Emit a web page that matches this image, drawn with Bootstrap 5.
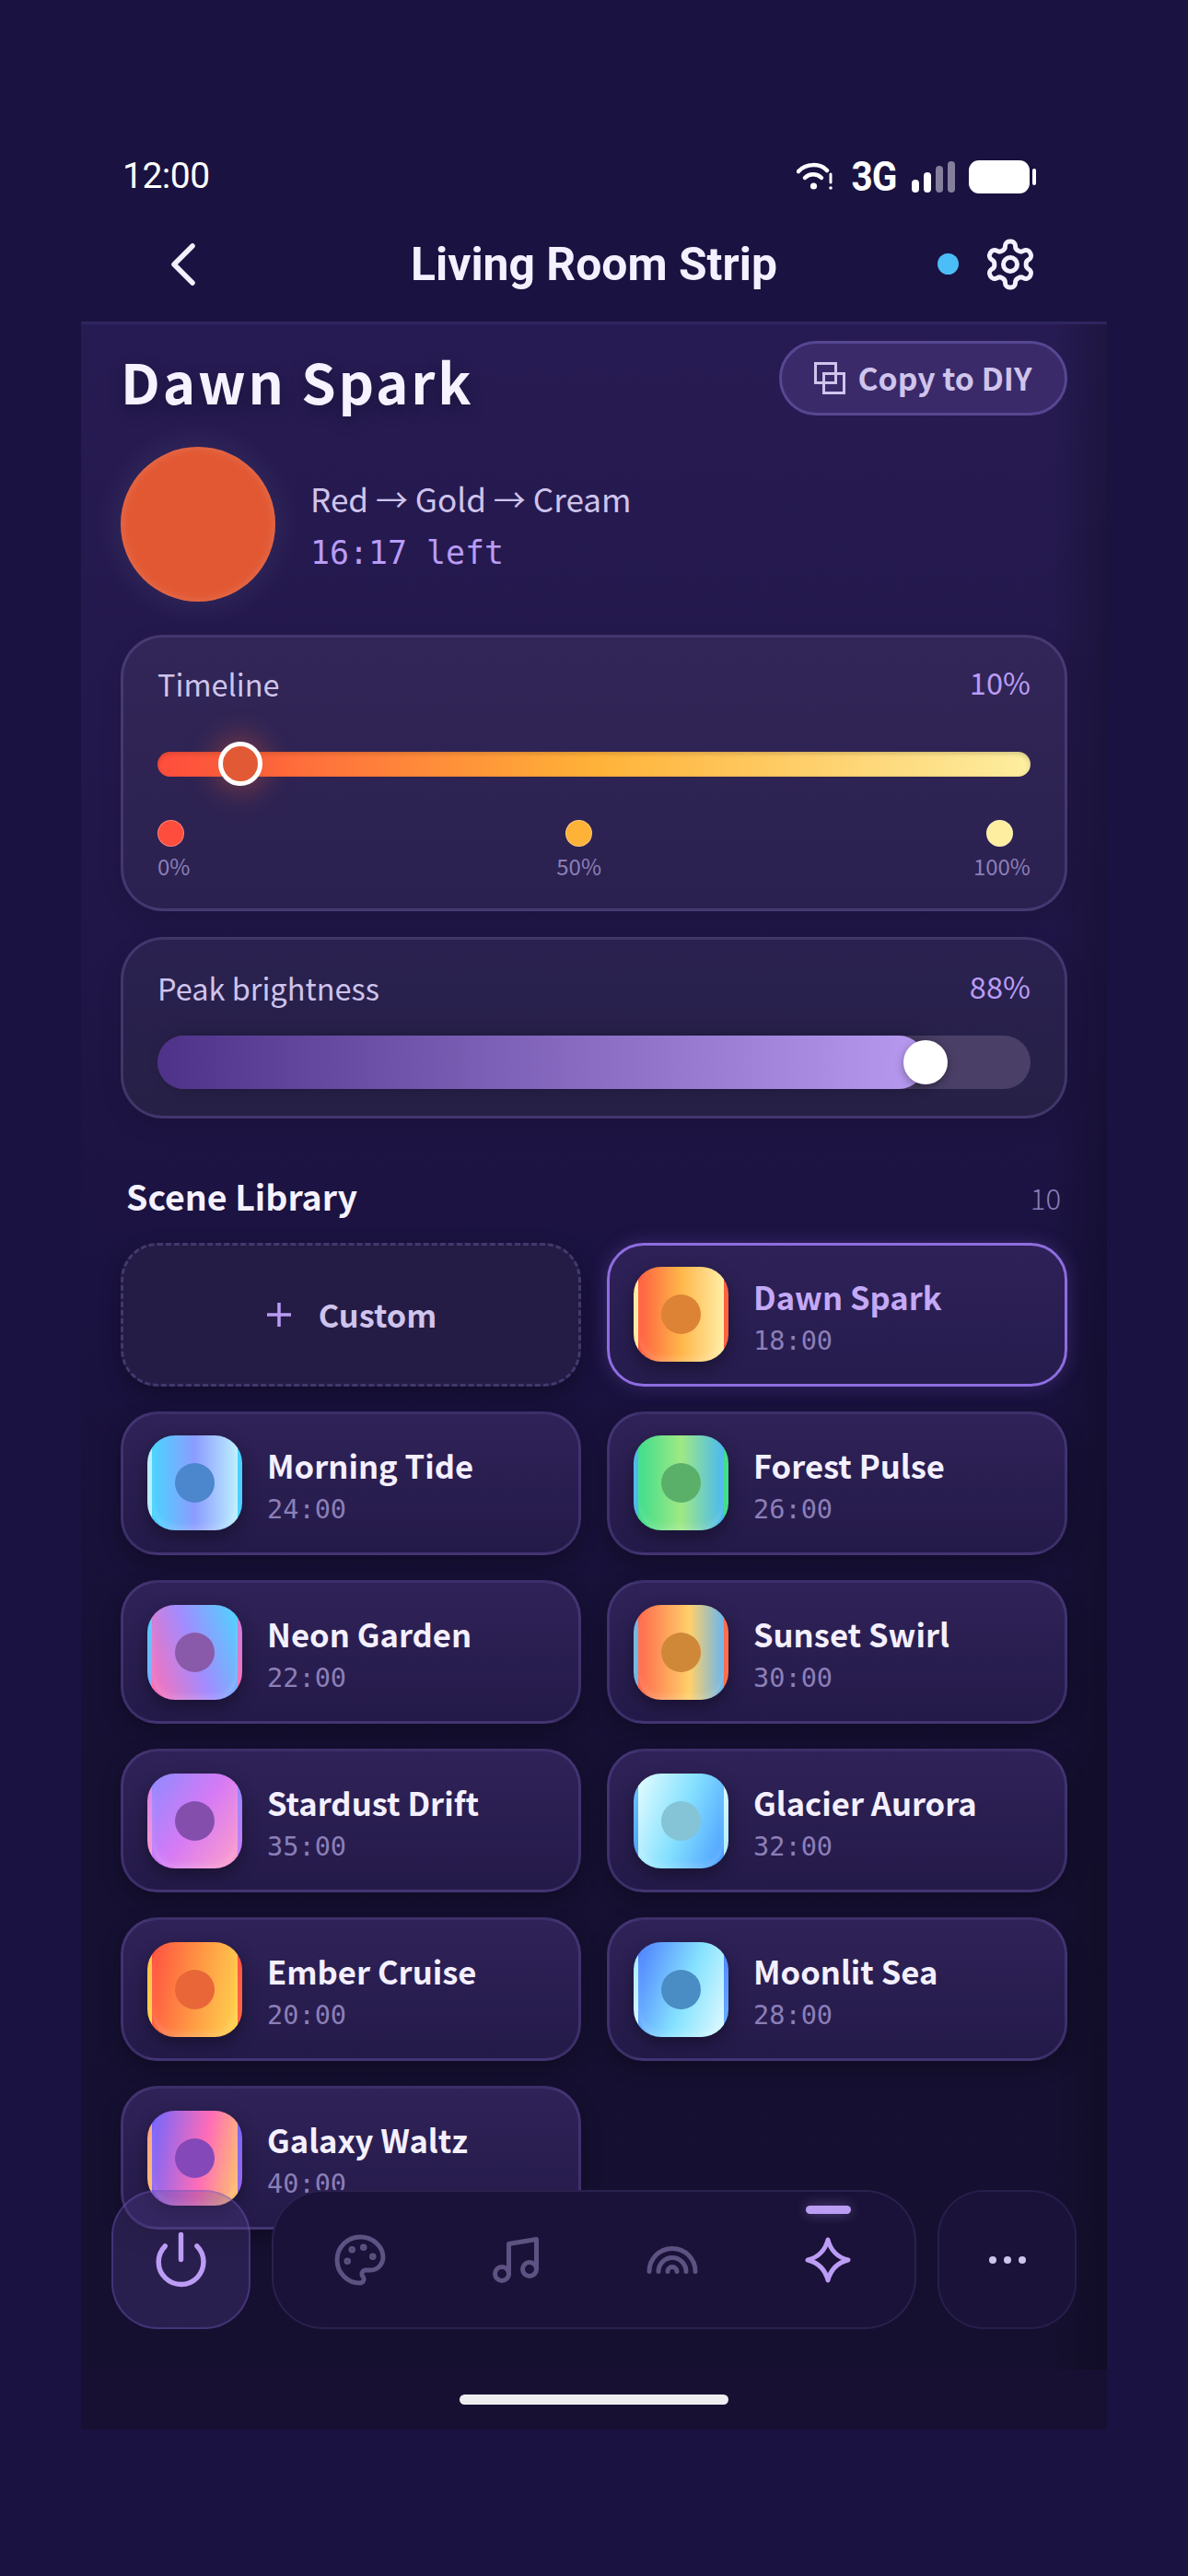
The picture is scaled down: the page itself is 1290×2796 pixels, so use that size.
<!DOCTYPE html>
<html lang="en">
<head>
<meta charset="utf-8">
<title>Living Room Strip</title>
<link href="https://cdn.jsdelivr.net/npm/bootstrap@5.3.0/dist/css/bootstrap.min.css" rel="stylesheet">
<style>
html,body{height:2796px;overflow:hidden}
body{background:#1a1240;font-family:"Noto Sans CJK SC","Noto Sans",sans-serif;color:#f4f0ff;padding-top:144px}
.phone{width:1114px;height:2493px;margin:0 auto;position:relative;overflow:hidden;background:#1a1240}
.statusbar{height:92px;padding:3px 77px 0 45px;font-family:Roboto,sans-serif}
.clock{font-size:39px;letter-spacing:-.5px;color:#fff}
.net{display:inline-block;font-size:45px;font-weight:700;color:#fff;letter-spacing:-1px;line-height:1;margin:0 17px 0 14px;transform:scaleX(.9);transform-origin:right center}
.batt{margin-left:15px}
.topbar{height:116px;padding:0 75px 12px;border-bottom:3px solid #2f2560}
.flank{width:220px}
.flank-left{padding-left:23px}
.apptitle{font-family:Roboto,sans-serif;font-weight:700;font-size:49.8px;color:#f4f0ff;margin:0;padding-top:3px}
.livedot{width:23px;height:23px;border-radius:50%;background:#4bbdf7;margin-right:26px}
.pane{height:2220px;overflow:hidden;padding:18px 43px 0;position:relative;
 background:linear-gradient(90deg,rgba(0,0,0,0) 94.5%,rgba(0,0,0,.22) 100%),linear-gradient(180deg,#271b53 0,#221749 25%,#1a1240 48%,#161033 70%,#151030 100%)}
.footstrip{height:65px;background:#171033;padding-top:27px}
.homebar{width:292px;height:11px;border-radius:6px;background:#eeeef0;margin:0 auto}
.hero-name{font-size:60px;font-weight:700;letter-spacing:2.8px;margin:0;line-height:81px;color:#f6f2ff;text-shadow:0 6px 18px rgba(0,0,0,.3);position:relative;top:2px}
.copybtn{height:81px;width:313px;border-radius:41px;background:#3a2a6a;border:3px solid #574791;color:#cfc4ec;font-size:33.8px;font-weight:600;padding:0;gap:13px}
.heroinfo{margin-top:34px;gap:38px}
.orb{width:168px;height:168px;border-radius:50%;background:#e25833;box-shadow:0 0 38px rgba(255,255,255,.09),inset 0 0 11px rgba(255,255,255,.17);flex:none}
.hero-info-text{padding-top:3px}
.hero-sub{font-size:35.1px;color:#cfc4ec;line-height:50px;font-weight:400}
.hero-time{font-family:"DejaVu Sans Mono",monospace;font-size:34.9px;color:#b99cf5;line-height:50px;margin-top:9px}
.panel{border-radius:46px;border:3px solid rgba(115,98,170,.35);box-shadow:0 8px 24px rgba(0,0,0,.12)}
.panel-a{margin-top:36px;height:300px;padding:25px 37px 0;background:linear-gradient(180deg,#312657 0,#2b2150 100%)}
.panel-b{margin-top:28px;height:197px;padding:27px 37px 0;background:linear-gradient(180deg,#2a2150 0,#262046 100%)}
.rowhead{height:52px}
.rowlab{line-height:50px;font-size:32.5px;color:#cfc4ec;font-weight:400}
.rowval{color:#b99cf5;font-size:32.6px;font-weight:400;line-height:46px}
.track-a{height:27px;border-radius:14px;margin-top:47px;position:relative;background:linear-gradient(90deg,#ff4d3d 0,#ffb238 50%,#fdeea0 100%);box-shadow:inset 0 2px 5px rgba(0,0,0,.18)}
.knob-a{position:absolute;width:48px;height:48px;left:66px;top:-11px;border-radius:50%;background:#e25a35;border:5px solid #fff;box-shadow:0 0 30px 6px rgba(226,90,53,.4)}
.marks{margin-top:47px}
.stop{display:flex;flex-direction:column}
.stop-mid{align-items:center;margin-right:6px}
.stop-end{align-items:flex-end}
.pip{width:29px;height:29px;border-radius:50%;border:1.5px solid rgba(255,255,255,.3)}
.stop-end .pip{margin-right:19px}
.pip-a{background:#ff4d3d}.pip-b{background:#ffb238}.pip-c{background:#fdeea0}
.stoplab{font-size:24px;line-height:36px;margin-top:3px;color:#8b7fb8;font-weight:400}
.track-b{height:58px;border-radius:29px;margin-top:25px;background:#4a3f66;position:relative}
.fill-b{height:100%;border-radius:29px;background:linear-gradient(90deg,#4e3289,#b89af0);box-shadow:6px 0 16px rgba(0,0,0,.25)}
.knob-b{position:absolute;width:48px;height:48px;top:5px;border-radius:50%;background:#fff;box-shadow:0 3px 10px rgba(0,0,0,.35)}
.libhead{margin-top:61px;height:54px;padding:0 7px 0 6px}
.libhead h2{font-size:37.5px;font-weight:600;margin:0 0 9px;color:#f6f2ff}
.libcount{font-size:31px;font-weight:300;color:#8b7fb8;margin-bottom:3px}
.scenes{display:grid;grid-template-columns:500px 500px;gap:27.4px 28px;margin-top:20px}
.tile{height:155.7px;border-radius:40px;border:3px solid rgba(105,88,165,.35);background:linear-gradient(180deg,#2f2258 0,#241a49 100%);box-shadow:0 8px 22px rgba(0,0,0,.3);padding:0 0 0 26px;gap:27px}
.tile-new{border:3px dashed rgba(120,105,175,.38);background:#251c46;justify-content:center;padding:0;gap:28px;color:#cfc4ec;font-size:34.3px;font-weight:600}
.tile-new svg{color:#b99cf5}
.tile-on{border-color:#8e6de0;background:linear-gradient(180deg,#2e2158 0,#261c4d 100%);box-shadow:0 0 20px rgba(142,109,224,.25)}
.swatch{width:103px;height:103px;border-radius:30px;border-style:solid;border-color:transparent;border-width:0 5px;box-shadow:inset 0 -5px 6px rgba(255,255,255,.14),0 7px 18px rgba(0,0,0,.35);flex:none;display:flex;align-items:center;justify-content:center}
.swatch i{display:block;width:43px;height:43px;border-radius:50%}
.g-dawn{background-image:linear-gradient(90deg,#ff5f40,#ffb64a 50%,#ffeea6)}.g-dawn i{background:#dd8335}
.g-morn{background-image:linear-gradient(90deg,#49d4ff,#8c9cff 50%,#bdf0ff)}.g-morn i{background:#4c86cc}
.g-forest{background-image:linear-gradient(90deg,#3fdd8c,#9fe984 50%,#4ab8f2)}.g-forest i{background:#5ab069}
.g-neon{background-image:linear-gradient(70deg,#ff6fb4,#a18cff 50%,#4cd6ff)}.g-neon i{background:#8a5aaa}
.g-sunset{background-image:linear-gradient(90deg,#ff6a4c,#ffd06a 60%,#6ab6ee)}.g-sunset i{background:#cf8838}
.g-star{background-image:linear-gradient(125deg,#8f8aff,#d67af5 50%,#ffa0c8)}.g-star i{background:#844fac}
.g-glacier{background-image:linear-gradient(110deg,#e4fdff,#84e0ff 50%,#4a9cff)}.g-glacier i{background:#85c3d6}
.g-ember{background-image:linear-gradient(100deg,#ff5040,#ff9644 50%,#ffd64e)}.g-ember i{background:#e86638}
.g-moon{background-image:linear-gradient(110deg,#4c7eff,#86e2ff 55%,#e0fbff)}.g-moon i{background:#4a8cc4}
.g-galaxy{background-image:linear-gradient(100deg,#7066ff,#ff6cb8 58%,#ffc66a)}.g-galaxy i{background:#8548b8}
.sname{font-size:34.6px;font-weight:600;line-height:50px;padding-top:2px;color:#f4f0ff;white-space:nowrap}
.tile-on .sname{color:#c4a9f6}
.stime{font-family:"DejaVu Sans Mono",monospace;font-size:28.6px;line-height:38px;color:#8b7fb8;margin-top:4px}
.dock{position:absolute;left:33px;top:2233px;width:1048px;height:151px;display:flex;gap:23px}
.dock-btn{width:151px;height:151px;flex:none;border-radius:50px}
.dock-power{background:rgba(90,65,150,.3);border:2px solid rgba(120,92,200,.35);color:#bc9df5}
.dock-main{flex:1;position:relative;border-radius:56px;background:#1a1238;border:2px solid rgba(80,68,130,.3);color:#5d5282;gap:109.6px}
.dock-item{width:60px;height:60px}
.dock-on{color:#bc9df5}
.dock-ind{position:absolute;top:15px;left:578px;width:49px;height:9px;border-radius:5px;background:#bc9df5;box-shadow:0 0 14px rgba(188,157,245,.4)}
.dock-more{background:#1a1238;border:2px solid rgba(80,68,130,.25);color:#cfc4ec;gap:8px}
.dock-more span{width:8px;height:8px;border-radius:50%;background:currentColor;display:block}
</style>
</head>
<body>
<div class="phone">
  <div class="statusbar d-flex align-items-center justify-content-between">
    <span class="clock">12:00</span>
    <div class="d-flex align-items-center">
      <svg width="40" height="32" viewBox="0 0 40 32" fill="none" stroke="#fff" stroke-linecap="round"><path d="M2 10C10 1 26 1 33 9" stroke-width="4.500"/><path d="M9 17c5-5 13-5 18 0" stroke-width="4.500"/><circle cx="18.500" cy="26" r="3.600" fill="#fff" stroke="none"/><path d="M37 13v9" stroke-width="3"/><circle cx="37" cy="28" r="1.800" fill="#fff" stroke="none"/></svg>
      <span class="net">3G</span>
      <svg width="47" height="34" viewBox="0 0 47 34"><rect x="0" y="20" width="8" height="14" rx="4" fill="#fff"/><rect x="13" y="12" width="8" height="22" rx="4" fill="#fff"/><rect x="26" y="5" width="8" height="29" rx="4" fill="#857f9c"/><rect x="39" y="0" width="8" height="34" rx="4" fill="#857f9c"/></svg>
      <svg class="batt" width="73" height="36" viewBox="0 0 73 36"><rect x="0" y="0" width="66" height="36" rx="11" fill="#fff"/><rect x="69" y="9" width="4" height="18" rx="2" fill="#fff"/></svg>
    </div>
  </div>
  <nav class="topbar d-flex align-items-center">
    <div class="flank flank-left d-flex">
      <svg width="26" height="46" viewBox="0 0 26 46" fill="none" stroke="#f4f0ff" stroke-width="5.500" stroke-linecap="round" stroke-linejoin="round"><path d="M23 3 3 23l20 20"/></svg>
    </div>
    <h1 class="apptitle flex-grow-1 text-center">Living Room Strip</h1>
    <div class="flank d-flex align-items-center justify-content-end">
      <span class="livedot"></span>
      <svg width="60" height="60" viewBox="0 0 24 24" fill="none" stroke="#f4f0ff" stroke-width="2" stroke-linecap="round" stroke-linejoin="round"><path d="M12.220 2h-.44a2 2 0 0 0-2 2v.18a2 2 0 0 1-1 1.730l-.43.25a2 2 0 0 1-2 0l-.15-.08a2 2 0 0 0-2.730.73l-.22.38a2 2 0 0 0 .73 2.730l.15.1a2 2 0 0 1 1 1.720v.51a2 2 0 0 1-1 1.740l-.15.09a2 2 0 0 0-.73 2.730l.22.38a2 2 0 0 0 2.730.73l.15-.08a2 2 0 0 1 2 0l.43.25a2 2 0 0 1 1 1.730V20a2 2 0 0 0 2 2h.44a2 2 0 0 0 2-2v-.18a2 2 0 0 1 1-1.730l.43-.25a2 2 0 0 1 2 0l.15.08a2 2 0 0 0 2.730-.73l.22-.39a2 2 0 0 0-.73-2.730l-.15-.08a2 2 0 0 1-1-1.740v-.5a2 2 0 0 1 1-1.740l.15-.09a2 2 0 0 0 .73-2.730l-.22-.38a2 2 0 0 0-2.730-.73l-.15.08a2 2 0 0 1-2 0l-.43-.25a2 2 0 0 1-1-1.730V4a2 2 0 0 0-2-2z"/><circle cx="12" cy="12" r="3"/></svg>
    </div>
  </nav>

  <main class="pane">
    <div class="d-flex align-items-center justify-content-between">
      <h2 class="hero-name">Dawn Spark</h2>
      <button type="button" class="btn copybtn d-flex align-items-center justify-content-center">
        <svg width="34" height="35" viewBox="0 0 34 35" fill="none" stroke="#cfc4ec" stroke-width="3"><rect x="1.500" y="1.500" width="22" height="21"/><rect x="10.500" y="12.500" width="22" height="21"/></svg>
        Copy to DIY
      </button>
    </div>
    <div class="heroinfo d-flex align-items-center">
      <div class="orb"></div>
      <div class="hero-info-text">
        <div class="hero-sub">Red → Gold → Cream</div>
        <div class="hero-time">16:17 left</div>
      </div>
    </div>

    <section class="panel panel-a">
      <div class="rowhead d-flex justify-content-between"><span class="rowlab">Timeline</span><span class="rowval">10%</span></div>
      <div class="track-a"><div class="knob-a"></div></div>
      <div class="marks d-flex justify-content-between">
        <div class="stop"><span class="pip pip-a"></span><span class="stoplab">0%</span></div>
        <div class="stop stop-mid"><span class="pip pip-b"></span><span class="stoplab">50%</span></div>
        <div class="stop stop-end"><span class="pip pip-c"></span><span class="stoplab">100%</span></div>
      </div>
    </section>

    <section class="panel panel-b">
      <div class="rowhead d-flex justify-content-between"><span class="rowlab">Peak brightness</span><span class="rowval">88%</span></div>
      <div class="track-b"><div class="fill-b" style="width:88%"></div><div class="knob-b" style="left:810px"></div></div>
    </section>

    <div class="libhead d-flex align-items-center justify-content-between">
      <h2>Scene Library</h2><span class="libcount">10</span>
    </div>

    <div class="scenes">
      <div class="tile tile-new d-flex align-items-center">
        <svg width="30" height="30" viewBox="0 0 30 30" stroke="currentColor" stroke-width="3.500"><path d="M15 2v26M2 15h26"/></svg>
        <span>Custom</span>
      </div>
      <div class="tile tile-on d-flex align-items-center"><div class="swatch g-dawn"><i></i></div><div><div class="sname">Dawn Spark</div><div class="stime">18:00</div></div></div>
      <div class="tile d-flex align-items-center"><div class="swatch g-morn"><i></i></div><div><div class="sname">Morning Tide</div><div class="stime">24:00</div></div></div>
      <div class="tile d-flex align-items-center"><div class="swatch g-forest"><i></i></div><div><div class="sname">Forest Pulse</div><div class="stime">26:00</div></div></div>
      <div class="tile d-flex align-items-center"><div class="swatch g-neon"><i></i></div><div><div class="sname">Neon Garden</div><div class="stime">22:00</div></div></div>
      <div class="tile d-flex align-items-center"><div class="swatch g-sunset"><i></i></div><div><div class="sname">Sunset Swirl</div><div class="stime">30:00</div></div></div>
      <div class="tile d-flex align-items-center"><div class="swatch g-star"><i></i></div><div><div class="sname">Stardust Drift</div><div class="stime">35:00</div></div></div>
      <div class="tile d-flex align-items-center"><div class="swatch g-glacier"><i></i></div><div><div class="sname">Glacier Aurora</div><div class="stime">32:00</div></div></div>
      <div class="tile d-flex align-items-center"><div class="swatch g-ember"><i></i></div><div><div class="sname">Ember Cruise</div><div class="stime">20:00</div></div></div>
      <div class="tile d-flex align-items-center"><div class="swatch g-moon"><i></i></div><div><div class="sname">Moonlit Sea</div><div class="stime">28:00</div></div></div>
      <div class="tile d-flex align-items-center"><div class="swatch g-galaxy"><i></i></div><div><div class="sname">Galaxy Waltz</div><div class="stime">40:00</div></div></div>
    </div>
  </main>

  <div class="dock">
    <div class="dock-btn dock-power d-flex align-items-center justify-content-center">
      <svg width="65" height="65" viewBox="0 0 24 24" fill="none" stroke="currentColor" stroke-width="2" stroke-linecap="round" stroke-linejoin="round"><path d="M12 2v10"/><path d="M18.400 6.600a9 9 0 1 1-12.770.04"/></svg>
    </div>
    <div class="dock-main d-flex align-items-center justify-content-center">
      <span class="dock-ind"></span>
      <svg class="dock-item" viewBox="0 0 24 24" fill="none" stroke="currentColor" stroke-width="2" stroke-linecap="round" stroke-linejoin="round"><circle cx="13.500" cy="6.500" r=".5" fill="currentColor"/><circle cx="17.500" cy="10.500" r=".5" fill="currentColor"/><circle cx="8.500" cy="7.500" r=".5" fill="currentColor"/><circle cx="6.500" cy="12.500" r=".5" fill="currentColor"/><path d="M12 2C6.500 2 2 6.500 2 12s4.500 10 10 10c.926 0 1.648-.746 1.648-1.688 0-.437-.18-.835-.437-1.125-.29-.289-.438-.652-.438-1.125a1.640 1.640 0 0 1 1.668-1.668h1.996c3.051 0 5.555-2.503 5.555-5.554C21.965 6.012 17.461 2 12 2z"/></svg>
      <svg class="dock-item" viewBox="0 0 24 24" fill="none" stroke="currentColor" stroke-width="2" stroke-linecap="round" stroke-linejoin="round"><path d="M9 18V5l12-2v13"/><circle cx="6" cy="18" r="3"/><circle cx="18" cy="16" r="3"/></svg>
      <svg class="dock-item" viewBox="0 0 24 24" fill="none" stroke="currentColor" stroke-width="2" stroke-linecap="round" stroke-linejoin="round"><path d="M22 17a10 10 0 0 0-20 0"/><path d="M18 17a6 6 0 0 0-12 0"/><path d="M14 17a2 2 0 0 0-4 0"/></svg>
      <svg class="dock-item dock-on" viewBox="-4 -4 60 60" fill="none" stroke="currentColor" stroke-width="5" stroke-linejoin="round"><path d="M26 4Q30.500 21.500 48 26 30.500 30.500 26 48 21.500 30.500 4 26 21.500 21.500 26 4Z"/></svg>
    </div>
    <div class="dock-btn dock-more d-flex align-items-center justify-content-center"><span></span><span></span><span></span></div>
  </div>
  <div class="footstrip"><div class="homebar"></div></div>
</div>
<script src="https://cdn.jsdelivr.net/npm/bootstrap@5.3.0/dist/js/bootstrap.bundle.min.js"></script>
</body>
</html>
